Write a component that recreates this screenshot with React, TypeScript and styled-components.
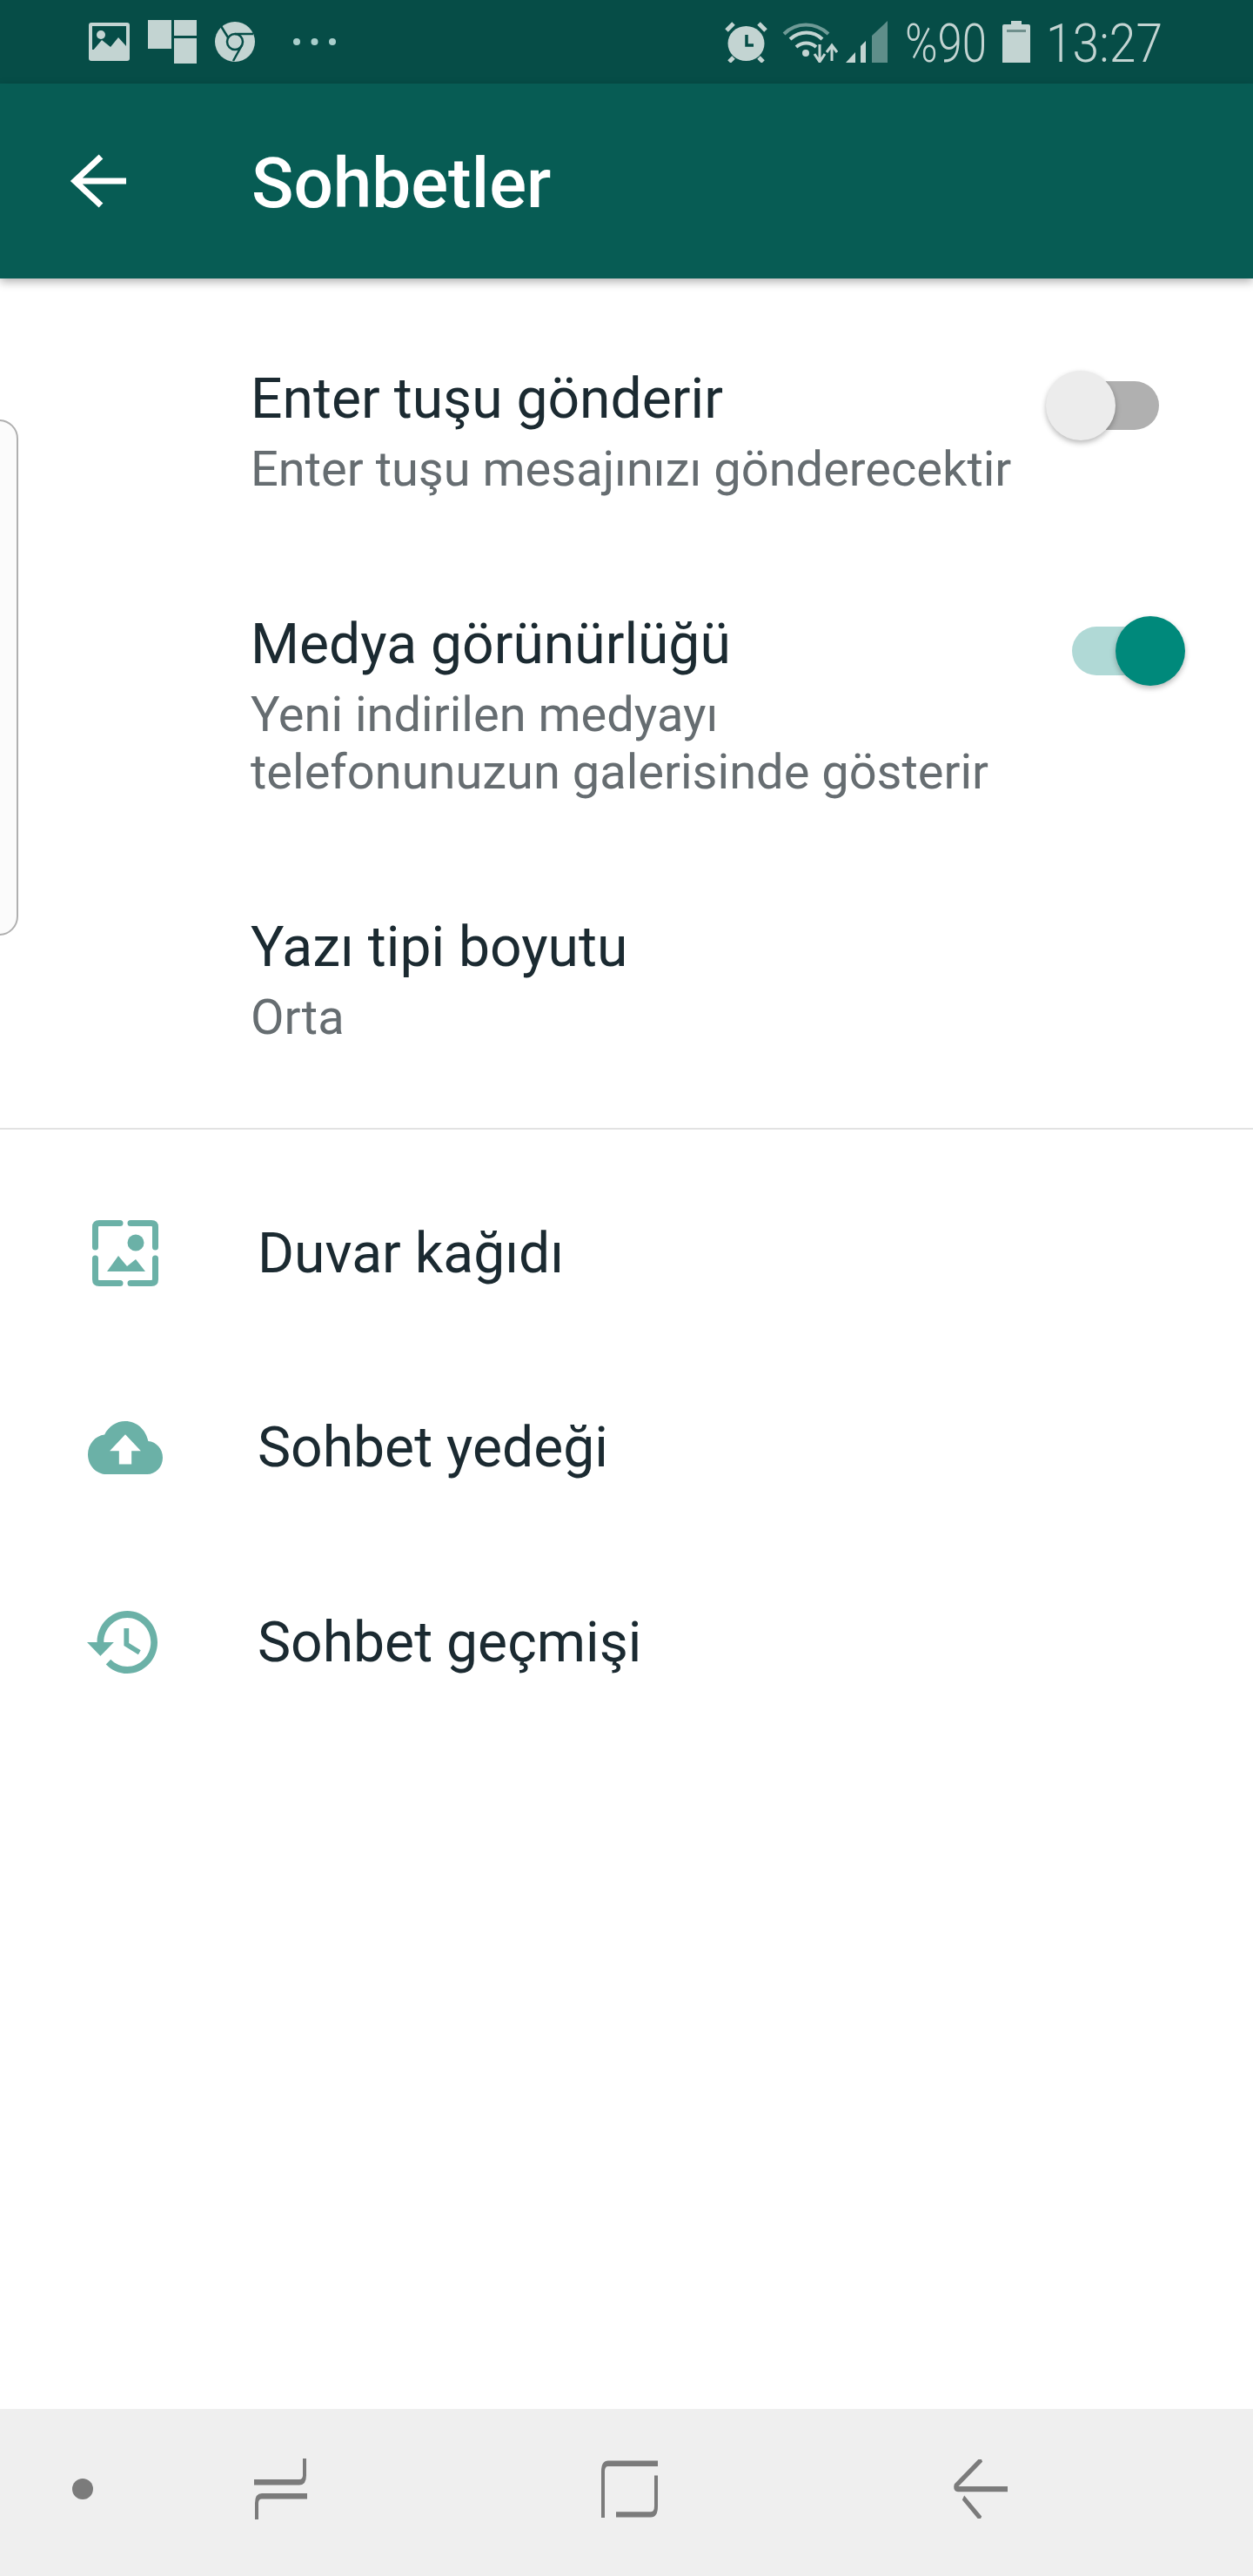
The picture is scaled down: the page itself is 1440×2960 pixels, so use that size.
import React from "react";
import styled, { createGlobalStyle } from "styled-components";

const Global = createGlobalStyle`
  html, body { margin: 0; padding: 0; background: #fff; }
  * { box-sizing: border-box; }
`;

const Page = styled.div`
  position: relative;
  width: 1440px;
  height: 2960px;
  display: flex;
  flex-direction: column;
  overflow: hidden;
  background: #fff;
  font-family: Roboto, "Noto Sans", sans-serif;
`;

const StatusBar = styled.div`
  height: 96px;
  flex: none;
  display: flex;
  justify-content: space-between;
  align-items: center;
  padding: 0 108px 0 102px;
  background: #064d47;
  color: #c3d4d2;
`;

const StatusGroup = styled.div`
  display: flex;
  align-items: center;
`;

const StatusIcon = styled.svg<{ $gap?: number }>`
  display: block;
  flex: none;
  margin-left: ${(p) => p.$gap ?? 0}px;
`;

const StatusText = styled.span<{ $width: number; $gap: number; $squeeze: number }>`
  display: block;
  flex: none;
  width: ${(p) => p.$width}px;
  margin: 3px 0 0 ${(p) => p.$gap}px;
  font-size: 62px;
  font-weight: 300;
  line-height: 62px;
  white-space: nowrap;
  transform-origin: left center;
  transform: scaleX(${(p) => p.$squeeze});
`;

const AppBar = styled.header`
  position: relative;
  z-index: 1;
  height: 224px;
  flex: none;
  display: flex;
  align-items: center;
  padding-left: 80px;
  background: #075c54;
  box-shadow: 0 4px 10px rgba(0, 0, 0, 0.3);
`;

const BackArrow = styled.svg`
  display: block;
  flex: none;
`;

const Title = styled.h1`
  margin: 6px 0 0 144px;
  color: #fff;
  font-size: 80px;
  font-weight: 500;
  line-height: 84px;
  white-space: nowrap;
`;

const Content = styled.main`
  flex: 1;
  position: relative;
  min-height: 0;
`;

const EdgePanel = styled.div`
  position: absolute;
  left: -30px;
  top: 162px;
  width: 51px;
  height: 593px;
  border: 2px solid #b0b0b0;
  border-radius: 22px;
  background: #fbfbfb;
`;

const SettingsList = styled.section`
  display: flex;
  flex-direction: column;
  gap: 138px;
  padding: 108px 108px 94px 288px;
  border-bottom: 2px solid #e2e2e2;
`;

const SettingRow = styled.div`
  display: flex;
  justify-content: space-between;
  align-items: flex-start;
`;

const SettingText = styled.div`
  display: flex;
  flex-direction: column;
  gap: 18px;
`;

const SettingTitle = styled.div`
  color: #1b2a31;
  font-size: 64.200px;
  line-height: 60px;
  white-space: nowrap;
`;

const SettingSub = styled.div`
  color: #666d71;
  font-size: 56px;
  line-height: 66px;
  white-space: nowrap;
`;

const Track = styled.div<{ $on?: boolean }>`
  position: relative;
  flex: none;
  width: 100px;
  height: 56px;
  margin-top: 10px;
  border-radius: 28px;
  background: ${(p) => (p.$on ? "#b0d9d6" : "#b0b0b0")};
`;

const Knob = styled.div<{ $on?: boolean }>`
  position: absolute;
  top: -12px;
  left: ${(p) => (p.$on ? "50px" : "-30px")};
  width: 80px;
  height: 80px;
  border-radius: 50%;
  background: ${(p) => (p.$on ? "#00897b" : "#ececec")};
  box-shadow: 0 3px 6px rgba(0, 0, 0, 0.28);
`;

const MenuList = styled.nav`
  display: flex;
  flex-direction: column;
  padding-top: 30px;
`;

const MenuRow = styled.div`
  height: 223.5px;
  display: flex;
  align-items: center;
  padding-left: 94px;
`;

const MenuIconSlot = styled.div<{ $nudge?: number }>`
  width: 100px;
  height: 100px;
  flex: none;
  display: flex;
  align-items: center;
  justify-content: center;
  padding-right: ${(p) => p.$nudge ?? 0}px;
  color: #6bb1a7;
`;

const MenuLabel = styled.div`
  margin-left: 102px;
  color: #1b2a31;
  font-size: 64.200px;
  line-height: 70px;
  white-space: nowrap;
`;

const NavBar = styled.footer`
  height: 192px;
  flex: none;
  display: flex;
  align-items: center;
  padding: 0 0 8px 83px;
  background: #efefef;
`;

const NavDot = styled.div`
  width: 24px;
  height: 24px;
  flex: none;
  border-radius: 50%;
  background: #7b7b7b;
`;

const NavIcon = styled.svg<{ $gap: number }>`
  display: block;
  flex: none;
  margin-left: ${(p) => p.$gap}px;
  fill: none;
  stroke: #7b7b7b;
  stroke-width: 4;
`;

const c = "#c3d4d2";
const d = "#064d47";

export default function App() {
  return (
    <Page>
      <Global />
      <StatusBar>
        <StatusGroup>
          <StatusIcon width="47" height="44" viewBox="0 0 47 44">
            <rect width="47" height="44" rx="3" fill={c} />
            <rect x="4" y="4" width="39" height="27" fill={d} />
            <circle cx="14" cy="14" r="5" fill={c} />
            <path d="M4 33 L15 20 L25 28 L34 17 L43 27 V36 H4 Z" fill={c} />
          </StatusIcon>
          <StatusIcon $gap={21} width="56" height="50" viewBox="0 0 56 50" fill={c}>
            <rect width="27" height="33" />
            <rect x="30" width="26" height="18" />
            <rect x="30" y="21" width="26" height="29" />
          </StatusIcon>
          <StatusIcon $gap={21} width="46" height="46" viewBox="0 0 46 46">
            <ellipse cx="23" cy="23" rx="23" ry="23" fill={c} />
            <circle cx="23" cy="23" r="9" fill={c} stroke={d} strokeWidth="2.5" />
            <path d="M23 14 H44 M15 18 L7 5 M31 27 L21 45" stroke={d} strokeWidth="2.5" fill="none" />
          </StatusIcon>
          <StatusIcon $gap={44} width="50" height="10" viewBox="0 0 50 10" fill="#a9cfcc">
            <circle cx="4" cy="5" r="4" />
            <circle cx="24.500" cy="5" r="4" />
            <circle cx="45" cy="5" r="4" />
          </StatusIcon>
        </StatusGroup>
        <StatusGroup>
          <StatusIcon width="49" height="47" viewBox="0 0 49 47">
            <ellipse cx="24.500" cy="25" rx="21" ry="20" fill={c} />
            <path d="M2 10 L10 2 M47 10 L39 2 M5 46 L10 41 M44 46 L39 41" stroke={c} strokeWidth="5" />
            <path d="M25 15 V27 H33" stroke={d} strokeWidth="3.500" fill="none" />
          </StatusIcon>
          <StatusIcon $gap={17} width="64" height="47" viewBox="0 0 64 47" fill="none">
            <path d="M2 14 C16 0 38 0 53 14" stroke="#6f9a96" strokeWidth="4" />
            <path d="M9 20 C20 10 36 10 46 20" stroke={c} strokeWidth="4" />
            <path d="M16 29 C23 23 32 23 39 29" stroke={c} strokeWidth="4" />
            <circle cx="27" cy="36" r="4" fill={c} />
            <path d="M43 26 V46 M37 37 L43 46 L49 37 M57 45 V28 M51 35 L57 27 L63 35" stroke={c} strokeWidth="3" />
          </StatusIcon>
          <StatusIcon $gap={9} width="48" height="48" viewBox="0 0 48 48">
            <path d="M0 48 L11 36 V48 Z" fill={c} />
            <path d="M17 29 L23 23 V48 H17 Z" fill={c} />
            <path d="M30 17 L48 0 V48 H30 Z" fill="#5f8e8a" />
          </StatusIcon>
          <StatusText $width={93} $gap={20} $squeeze={0.82}>%90</StatusText>
          <StatusIcon $gap={19} width="32" height="48" viewBox="0 0 32 48" fill={c}>
            <path d="M10 0 H22 V4 H30 Q32 4 32 6 V48 H0 V6 Q0 4 2 4 H10 Z" />
            <rect x="5" y="10" width="22" height="3" fill="#6f8f8c" />
          </StatusIcon>
          <StatusText $width={130} $gap={18} $squeeze={0.89}>13:27</StatusText>
        </StatusGroup>
      </StatusBar>

      <AppBar>
        <BackArrow width="65" height="62" viewBox="0 0 65 62" fill="none" stroke="#fff" strokeWidth="7">
          <path d="M36 3 L6 31 L36 59 M6 31 H65" />
        </BackArrow>
        <Title>Sohbetler</Title>
      </AppBar>

      <Content>
        <EdgePanel />
        <SettingsList>
          <SettingRow>
            <SettingText>
              <SettingTitle>Enter tuşu gönderir</SettingTitle>
              <SettingSub>Enter tuşu mesajınızı gönderecektir</SettingSub>
            </SettingText>
            <Track>
              <Knob />
            </Track>
          </SettingRow>
          <SettingRow>
            <SettingText>
              <SettingTitle>Medya görünürlüğü</SettingTitle>
              <SettingSub>
                Yeni indirilen medyayı
                <br />
                telefonunuzun galerisinde gösterir
              </SettingSub>
            </SettingText>
            <Track $on>
              <Knob $on />
            </Track>
          </SettingRow>
          <SettingRow>
            <SettingText>
              <SettingTitle>Yazı tipi boyutu</SettingTitle>
              <SettingSub>Orta</SettingSub>
            </SettingText>
          </SettingRow>
        </SettingsList>

        <MenuList>
          <MenuRow>
            <MenuIconSlot>
              <svg width="76" height="76" viewBox="0 0 76 76" fill="none">
                <path
                  d="M3.500 31 V8 Q3.500 3.500 8 3.500 H32 M44 3.500 H68 Q72.500 3.500 72.500 8 V31 M72.500 44 V68 Q72.500 72.500 68 72.500 H44 M32 72.500 H8 Q3.500 72.500 3.500 68 V44"
                  stroke="currentColor"
                  strokeWidth="7"
                  strokeLinecap="round"
                />
                <circle cx="50" cy="26" r="9.500" fill="currentColor" />
                <path d="M17 59 L30 41 L40 53 L50 45 L61 59 Z" fill="currentColor" />
              </svg>
            </MenuIconSlot>
            <MenuLabel>Duvar kağıdı</MenuLabel>
          </MenuRow>
          <MenuRow>
            <MenuIconSlot>
              <svg width="86" height="61" viewBox="0 4 24 16" preserveAspectRatio="none" fill="currentColor">
                <path d="M19.35 10.04C18.67 6.59 15.64 4 12 4 9.11 4 6.6 5.64 5.35 8.04 2.34 8.36 0 10.91 0 14c0 3.31 2.69 6 6 6h13c2.76 0 5-2.24 5-5 0-2.64-2.05-4.78-4.65-4.96zM14 13v4h-4v-4H7l5-5 5 5h-3z" />
              </svg>
            </MenuIconSlot>
            <MenuLabel>Sohbet yedeği</MenuLabel>
          </MenuRow>
          <MenuRow>
            <MenuIconSlot $nudge={8}>
              <svg width="81" height="72" viewBox="1 3 21 18" preserveAspectRatio="none" fill="currentColor">
                <path d="M13 3c-4.97 0-9 4.03-9 9H1l3.89 3.89.07.14L9 12H6c0-3.87 3.13-7 7-7s7 3.13 7 7-3.13 7-7 7c-1.93 0-3.68-.79-4.94-2.06l-1.42 1.42C8.27 19.99 10.51 21 13 21c4.97 0 9-4.03 9-9s-4.03-9-9-9zm-1 5v5l4.28 2.54.72-1.21-3.5-2.08V8H12z" />
              </svg>
            </MenuIconSlot>
            <MenuLabel>Sohbet geçmişi</MenuLabel>
          </MenuRow>
        </MenuList>
      </Content>

      <NavBar>
        <NavDot />
        <NavIcon $gap={185} width="61" height="70" viewBox="0 0 61 43.750" preserveAspectRatio="none">
          <path d="M58 0 V12 Q58 17 52 17 H0 M61 27 H9 Q3 27 3 32 V43.750" />
        </NavIcon>
        <NavIcon $gap={338} width="65" height="66" viewBox="0 0 65 41.250" preserveAspectRatio="none">
          <path d="M65 2.300 H8 Q2 2.300 2 8 V41.250 M63 11 V33 Q63 39 57 39 H17" />
        </NavIcon>
        <NavIcon $gap={340} width="62" height="68" viewBox="0 0 62 42.500" preserveAspectRatio="none">
          <path d="M32 0 L2.500 19 Q1.500 21.300 5 21.300 H62 M11 27.500 L31 42.500" />
        </NavIcon>
      </NavBar>
    </Page>
  );
}
